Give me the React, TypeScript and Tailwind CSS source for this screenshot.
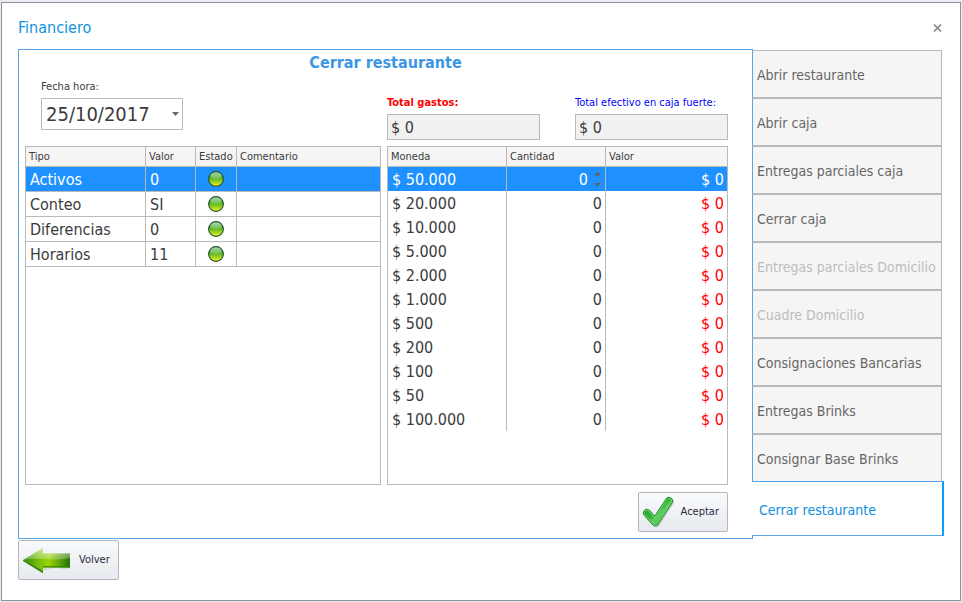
import { useState } from 'react'
import type { ReactNode } from 'react'
import { clsx } from 'clsx'

// ─── Data ─────────────────────────────────────────────────────────────────────

const CHECKS = [
  { tipo: 'Activos', valor: '0' },
  { tipo: 'Conteo', valor: 'SI' },
  { tipo: 'Diferencias', valor: '0' },
  { tipo: 'Horarios', valor: '11' },
]

const COINS = [
  '$ 50.000',
  '$ 20.000',
  '$ 10.000',
  '$ 5.000',
  '$ 2.000',
  '$ 1.000',
  '$ 500',
  '$ 200',
  '$ 100',
  '$ 50',
  '$ 100.000',
]

const TABS = [
  { label: 'Abrir restaurante' },
  { label: 'Abrir caja' },
  { label: 'Entregas parciales caja' },
  { label: 'Cerrar caja' },
  { label: 'Entregas parciales Domicilio', disabled: true },
  { label: 'Cuadre Domicilio', disabled: true },
  { label: 'Consignaciones Bancarias' },
  { label: 'Entregas Brinks' },
  { label: 'Consignar Base Brinks' },
  { label: 'Cerrar restaurante' },
]

// ─── Icons ────────────────────────────────────────────────────────────────────

function StatusLight() {
  return (
    <svg viewBox="0 0 16 16" className="mx-auto block size-4" role="img" aria-label="OK">
      <defs>
        <linearGradient id="light" x1="0" y1="0" x2="0" y2="1">
          <stop offset="0" stopColor="#5db45c" />
          <stop offset="0.45" stopColor="#55b42c" />
          <stop offset="0.75" stopColor="#a9d81a" />
          <stop offset="1" stopColor="#f8fa2e" />
        </linearGradient>
        <linearGradient id="shine" x1="0" y1="0" x2="0" y2="1">
          <stop offset="0" stopColor="#fff" stopOpacity="0.45" />
          <stop offset="1" stopColor="#fff" stopOpacity="0.12" />
        </linearGradient>
      </defs>
      <circle cx="8" cy="8" r="7.4" fill="url(#light)" stroke="#1f4f2c" strokeWidth="1.1" />
      <ellipse cx="8" cy="4.8" rx="5.6" ry="3.5" fill="url(#shine)" />
    </svg>
  )
}

function BackArrow() {
  return (
    <svg viewBox="0 0 50 28" className="h-7 w-[50px]" aria-hidden="true">
      <defs>
        <linearGradient id="arrow" x1="0" y1="0" x2="1" y2="0">
          <stop offset="0" stopColor="#2f8a08" />
          <stop offset="0.3" stopColor="#72ba0a" />
          <stop offset="0.55" stopColor="#9cd40a" />
          <stop offset="0.8" stopColor="#559f0c" />
          <stop offset="1" stopColor="#226f04" />
        </linearGradient>
        <linearGradient id="arrow-shine" x1="0" y1="0" x2="0" y2="1">
          <stop offset="0" stopColor="#fff" stopOpacity="0.6" />
          <stop offset="1" stopColor="#fff" stopOpacity="0.2" />
        </linearGradient>
      </defs>
      <path d="M2 16 L21 27.8 V22.6 H48 V21 L21 24 Z" fill="#8a9a86" opacity="0.4" />
      <path d="M1 14 L21 2 V7.5 H48 V21.5 H21 V27 Z" fill="url(#arrow)" />
      <path d="M1 14 L21 25 V20.2 H48 V21.5 H21 V27 L1 15 Z" fill="#2b8206" />
      <path d="M1 14 L21 2 V7.5 H48 V12 Q36 14.5 24 13 Q10 12 1 14 Z" fill="url(#arrow-shine)" />
    </svg>
  )
}

function CheckMark() {
  return (
    <svg viewBox="0 0 32 32" className="size-8" aria-hidden="true">
      <defs>
        <linearGradient id="check" x1="0" y1="0" x2="1" y2="1">
          <stop offset="0" stopColor="#1fa02c" />
          <stop offset="0.45" stopColor="#2fae38" />
          <stop offset="0.6" stopColor="#62cd60" />
          <stop offset="1" stopColor="#3cb544" />
        </linearGradient>
      </defs>
      <path d="M6 19.5 L14.5 28.5 L29 6" fill="none" stroke="#8f9a90" strokeWidth="6" strokeLinecap="round" strokeLinejoin="round" opacity="0.4" />
      <path d="M5 17 L13.2 26 L27 5" fill="none" stroke="#1f8a28" strokeWidth="8" strokeLinecap="round" strokeLinejoin="round" />
      <path d="M5 17 L13.2 26 L27 5" fill="none" stroke="#6fd36c" strokeWidth="6.4" strokeLinecap="round" strokeLinejoin="round" />
      <path d="M5 17 L13.2 26 L27 5" fill="none" stroke="url(#check)" strokeWidth="4.6" strokeLinecap="round" strokeLinejoin="round" />
    </svg>
  )
}

// ─── Shared pieces ────────────────────────────────────────────────────────────

function ActionButton({ icon, children }: { icon: ReactNode; children: ReactNode }) {
  return (
    <button
      type="button"
      className="flex h-10 items-center gap-[7px] rounded-xs border border-[#b4b8bd] bg-linear-to-b from-[#f8fafc] to-[#e7eaee] pl-[3px] pr-2 text-[11px] text-[#2b2b3b]"
    >
      {icon}
      {children}
    </button>
  )
}

function TotalField({ id, label, className }: { id: string; label: string; className: string }) {
  return (
    <div className="w-[153px]">
      <label htmlFor={id} className={clsx('block h-[17px] whitespace-nowrap text-[11px] leading-3', className)}>
        {label}
      </label>
      <input
        id={id}
        readOnly
        defaultValue="$ 0"
        className="block h-[26px] w-full border border-[#b9b9b9] bg-[#f0f2f2] px-[3px] text-base text-[#3b3b3b] outline-none"
      />
    </div>
  )
}

function HeadCell({ children, className }: { children: ReactNode; className?: string }) {
  return (
    <th
      className={clsx(
        'h-5 border-b border-[#b9b9b9] bg-[#f5f5f5] p-0 pl-[3px] text-left text-[11px] leading-4 font-normal not-last:border-r',
        className
      )}
    >
      {children}
    </th>
  )
}

// ─── Tables ───────────────────────────────────────────────────────────────────

function ChecksTable() {
  return (
    <div className="min-w-0 flex-1 border border-[#b9b9b9]">
      <table className="w-full table-fixed border-separate border-spacing-0 text-base leading-6">
        <thead>
          <tr>
            <HeadCell className="w-[120px]">Tipo</HeadCell>
            <HeadCell className="w-[50px]">Valor</HeadCell>
            <HeadCell className="w-[41px]">Estado</HeadCell>
            <HeadCell>Comentario</HeadCell>
          </tr>
        </thead>
        <tbody>
          {CHECKS.map((row, i) => (
            <tr
              key={row.tipo}
              className={clsx(
                '[&>td]:border-b [&>td]:border-[#b9b9b9] [&>td]:p-0 [&>td:not(:last-child)]:border-r',
                i === 0 && 'bg-[#1e90ff] text-white'
              )}
            >
              <td>
                <div className="pt-0.5 pl-1 leading-[22px]">{row.tipo}</div>
              </td>
              <td>
                <div className="pt-0.5 pl-1 leading-[22px]">{row.valor}</div>
              </td>
              <td>
                <StatusLight />
              </td>
              <td />
            </tr>
          ))}
        </tbody>
      </table>
    </div>
  )
}

function CoinsTable() {
  return (
    <div className="w-[341px] shrink-0 border border-[#b9b9b9]">
      <table className="w-full table-fixed border-separate border-spacing-0 text-base leading-[22px]">
        <thead>
          <tr>
            <HeadCell className="w-[119px]">Moneda</HeadCell>
            <HeadCell className="w-[99px]">Cantidad</HeadCell>
            <HeadCell>Valor</HeadCell>
          </tr>
        </thead>
        <tbody>
          {COINS.map((coin, i) => (
            <tr key={coin} className={clsx(i === 0 && 'bg-[#1e90ff] text-white')}>
              <td className="border-r border-[#b9b9b9] p-0 pt-0.5 pl-1">{coin}</td>
              <td className="border-r border-[#b9b9b9] p-0 pt-0.5 pr-[3px]">
                <div className="flex items-center justify-end gap-1.5">
                  0
                  {i === 0 && (
                    <svg viewBox="0 0 8 16" className="h-4 w-2" aria-hidden="true">
                      <path d="M0 3.5 L3.5 0 L7 3.5 Z M0 11 L3.5 14.5 L7 11 Z" fill="#5f6368" />
                    </svg>
                  )}
                </div>
              </td>
              <td className={clsx('p-0 pt-0.5 pr-[3px] text-right', i > 0 && 'text-[#ff0000]')}>$ 0</td>
            </tr>
          ))}
        </tbody>
      </table>
    </div>
  )
}

// ─── Side tabs ────────────────────────────────────────────────────────────────

function SideTabs({ active, onSelect }: { active: string; onSelect: (label: string) => void }) {
  return (
    <nav className="relative -ml-px flex w-48 shrink-0 flex-col pt-px text-sm">
      {TABS.map((tab) => (
        <button
          key={tab.label}
          type="button"
          disabled={tab.disabled}
          onClick={() => onSelect(tab.label)}
          className={clsx(
            'border-y pt-0.5 text-left whitespace-nowrap',
            tab.label === active
              ? '-mt-px h-[55px] border-[#5aa5e6] border-r-2 border-r-[#0a9ffb] bg-white pl-[7px] text-[#0f8fe0]'
              : 'mr-0.5 h-12 border-x border-[#b9b9b9] border-l-[#5aa5e6] bg-[#f5f5f5] pl-1',
            tab.label !== active && (tab.disabled ? 'text-[#bdbdbd]' : 'text-[#666]')
          )}
        >
          {tab.label}
        </button>
      ))}
    </nav>
  )
}

// ─── App ──────────────────────────────────────────────────────────────────────

export default function App() {
  const [active, setActive] = useState('Cerrar restaurante')

  return (
    <div className="flex min-h-screen flex-col bg-[#e9edf2] px-px pt-0.5 pb-px font-['DejaVu_Sans_Condensed','Noto_Sans',sans-serif] text-[#3b3b3b]">
      <main className="flex flex-1 flex-col border border-[#8f9499] bg-white px-4 pb-5">
        <header className="flex h-[46px] items-center justify-between pt-1">
          <h1 className="text-base text-[#0f93dc]">Financiero</h1>
          <button type="button" aria-label="Cerrar" className="p-0.5">
            <svg viewBox="0 0 9 8" className="h-2 w-[9px]" aria-hidden="true">
              <path d="M1 0.5 L8 7.5 M8 0.5 L1 7.5" stroke="#8a8a8a" strokeWidth="1.7" />
            </svg>
          </button>
        </header>

        <div className="flex flex-1">
          <section className="flex min-w-0 flex-1 flex-col border border-[#5aa5e6]">
            <h2 className="pt-[3px] text-center text-base leading-5 font-bold text-[#3c96e4]">
              Cerrar restaurante
            </h2>

            <div className="flex flex-1 flex-col pr-6 pb-1.5 pl-1.5">
              <div className="flex h-[73px] justify-between pb-1.5">
                <div className="pt-2 pl-4">
                  <label htmlFor="fecha" className="block h-[17px] text-[11px] leading-3">
                    Fecha hora:
                  </label>
                  <div className="relative w-[142px]">
                    <select
                      id="fecha"
                      className="block h-8 w-full appearance-none border border-[#b9b9b9] bg-white pl-1 text-xl leading-6 outline-none"
                    >
                      <option>25/10/2017</option>
                    </select>
                    <svg viewBox="0 0 7 4" className="pointer-events-none absolute top-3.5 right-1 h-1 w-[7px]" aria-hidden="true">
                      <path d="M0 0 H7 L3.5 4 Z" fill="#666" />
                    </svg>
                  </div>
                </div>
                <div className="flex w-[341px] items-end justify-between">
                  <TotalField id="gastos" label="Total gastos:" className="font-bold text-[#ff0000]" />
                  <TotalField id="efectivo" label="Total efectivo en caja fuerte:" className="text-[#0000ff]" />
                </div>
              </div>

              <div className="flex flex-1 gap-1.5">
                <ChecksTable />
                <CoinsTable />
              </div>

              <div className="flex justify-end pt-[7px]">
                <ActionButton icon={<CheckMark />}>Aceptar</ActionButton>
              </div>
            </div>
          </section>

          <SideTabs active={active} onSelect={setActive} />
        </div>

        <div className="flex pt-px">
          <ActionButton icon={<BackArrow />}>Volver</ActionButton>
        </div>
      </main>
    </div>
  )
}
